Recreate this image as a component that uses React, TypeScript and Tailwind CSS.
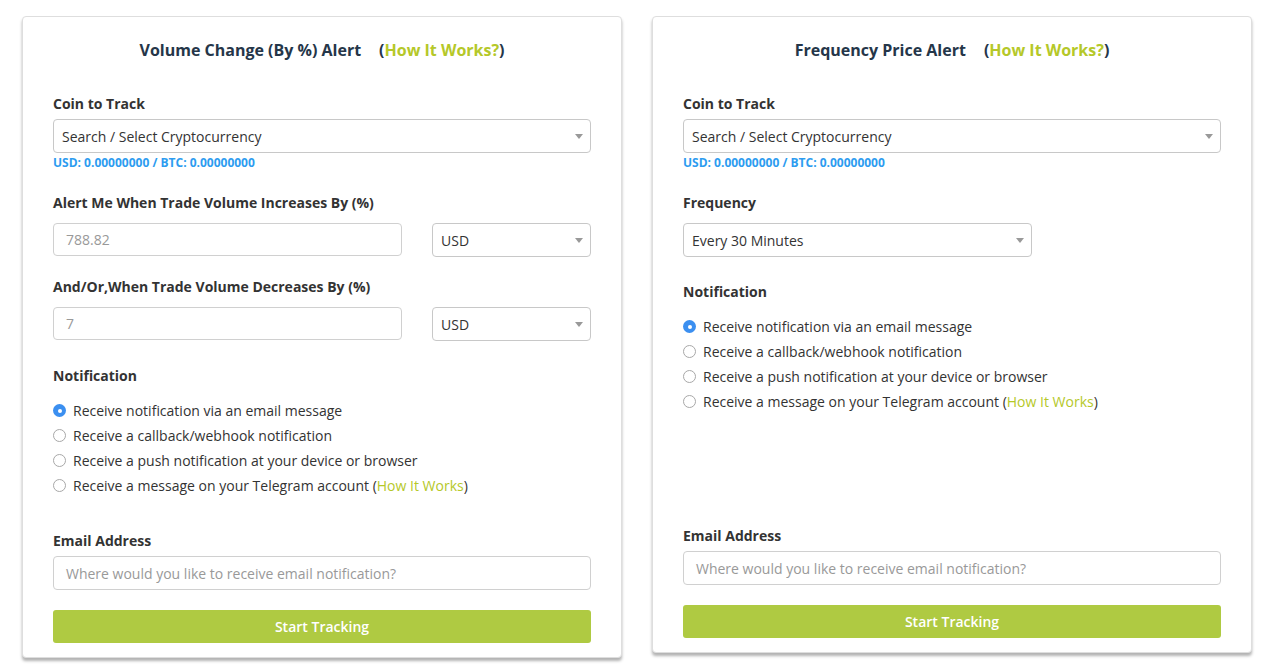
import React from 'react';

const FONT = { fontFamily: '"Open Sans", "Liberation Sans", sans-serif' };

function Caret() {
  return (
    <svg width="8" height="5" viewBox="0 0 8 5" className="shrink-0">
      <path d="M0 0h8L4 5z" fill="#999" />
    </svg>
  );
}

function SelectBox({ value, className = '' }: { value: string; className?: string }) {
  return (
    <div
      className={`flex items-center justify-between h-[34px] border border-[#c8c8c8] rounded-[4px] bg-white pl-[8px] pr-[7px] text-[14px] text-[#333] ${className}`}
    >
      <span>{value}</span>
      <Caret />
    </div>
  );
}

function TextBox({ value, className = '' }: { value: string; className?: string }) {
  return (
    <div
      className={`flex items-center h-[33px] border border-[#d0d0d0] rounded-[4px] bg-white px-[12px] text-[14px] text-[#999] ${className}`}
    >
      {value}
    </div>
  );
}

function Label({ children, className = '' }: { children: React.ReactNode; className?: string }) {
  return <div className={`text-[14px] leading-[20px] font-bold text-[#333] ${className}`}>{children}</div>;
}

function Radio({ checked }: { checked?: boolean }) {
  if (checked) {
    return (
      <span className="w-[13px] h-[13px] rounded-full bg-[#3b8ff0] flex items-center justify-center shrink-0">
        <span className="w-[4px] h-[4px] rounded-full bg-white" />
      </span>
    );
  }
  return <span className="w-[13px] h-[13px] rounded-full border border-[#a8a8a8] bg-white shrink-0" />;
}

const OPTIONS = [
  'Receive notification via an email message',
  'Receive a callback/webhook notification',
  'Receive a push notification at your device or browser',
];

function Notifications({ className = '' }: { className?: string }) {
  return (
    <div className={className}>
      <Label>Notification</Label>
      <div className="mt-[12px]">
        {OPTIONS.map((o, i) => (
          <div key={o} className="flex items-center gap-[7px] h-[25px] text-[14px] text-[#333]">
            <Radio checked={i === 0} />
            <span>{o}</span>
          </div>
        ))}
        <div className="flex items-center gap-[7px] h-[25px] text-[14px] text-[#333]">
          <Radio />
          <span>
            Receive a message on your Telegram account (<span className="text-[#b5c829]">How It Works</span>)
          </span>
        </div>
      </div>
    </div>
  );
}

function Header({ title }: { title: string }) {
  return (
    <div className="mt-[22px] text-center text-[16px] leading-[22px] font-bold text-[#253649]">
      {title}
      <span className="ml-[18px]">
        (<span className="text-[#b5c829]">How It Works?</span>)
      </span>
    </div>
  );
}

function CoinBlock() {
  return (
    <>
      <Label className="mt-[33px]">Coin to Track</Label>
      <SelectBox value="Search / Select Cryptocurrency" className="mt-[5px]" />
      <div className="mt-[2px] text-[12px] leading-[16px] font-bold text-[#2d9cf0]">
        USD: 0.00000000 / BTC: 0.00000000
      </div>
    </>
  );
}

function EmailBlock({ mt }: { mt: string }) {
  return (
    <>
      <Label className={mt}>Email Address</Label>
      <div className="mt-[5px] flex items-center h-[34px] border border-[#d0d0d0] rounded-[4px] bg-white px-[12px] text-[14px] text-[#999]">
        Where would you like to receive email notification?
      </div>
      <button className="mt-[20px] w-full h-[33px] rounded-[3px] bg-[#afca42] text-white text-[14px] font-semibold">
        Start Tracking
      </button>
    </>
  );
}

const CARD =
  'w-[600px] bg-white border border-[#dedede] rounded-[4px] shadow-[0_3px_3px_rgba(0,0,0,0.3)] px-[30px] pb-[14px]';

export default function App() {
  return (
    <div className="min-h-screen bg-white" style={FONT}>
      <div className="flex items-start gap-[30px] pl-[22px] pt-[16px]">
        {/* Volume change */}
        <div className={CARD}>
          <Header title="Volume Change (By %) Alert" />
          <CoinBlock />
          <Label className="mt-[22px]">Alert Me When Trade Volume Increases By (%)</Label>
          <div className="mt-[10px] flex justify-between">
            <TextBox value="788.82" className="w-[349px]" />
            <SelectBox value="USD" className="w-[159px] h-[33px]" />
          </div>
          <Label className="mt-[20px]">And/Or,When Trade Volume Decreases By (%)</Label>
          <div className="mt-[10px] flex justify-between">
            <TextBox value="7" className="w-[349px]" />
            <SelectBox value="USD" className="w-[159px] h-[33px]" />
          </div>
          <Notifications className="mt-[25px]" />
          <EmailBlock mt="mt-[33px]" />
        </div>

        {/* Frequency */}
        <div className={CARD}>
          <Header title="Frequency Price Alert" />
          <CoinBlock />
          <Label className="mt-[22px]">Frequency</Label>
          <SelectBox value="Every 30 Minutes" className="mt-[10px] w-[349px] h-[33px]" />
          <Notifications className="mt-[25px]" />
          <EmailBlock mt="mt-[112px]" />
        </div>
      </div>
    </div>
  );
}
